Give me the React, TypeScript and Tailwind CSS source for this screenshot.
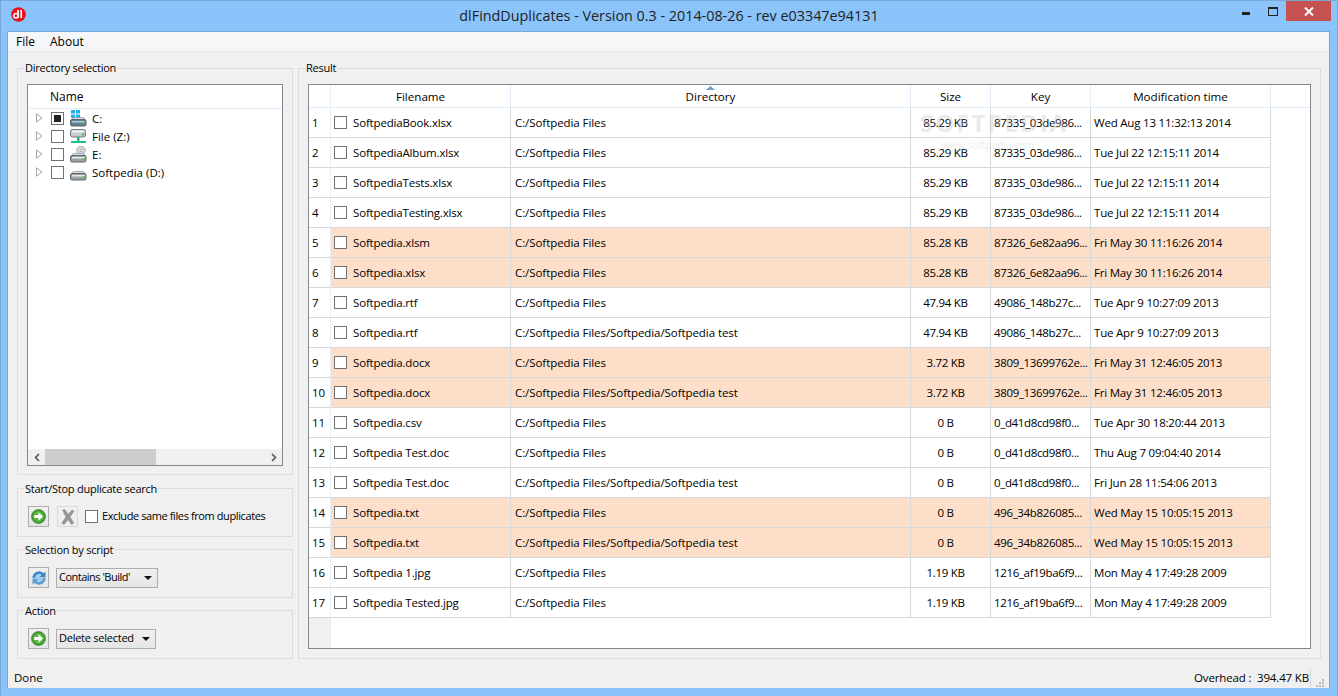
import React from "react";

const font = '"Open Sans","Noto Sans","Liberation Sans",sans-serif';

type Row = [string, string, string, string, string, boolean];
const D1 = "C:/Softpedia Files";
const D2 = "C:/Softpedia Files/Softpedia/Softpedia test";
const K1 = "87335_03de986...";
const K2 = "87326_6e82aa96...";
const K3 = "49086_148b27c...";
const K4 = "3809_13699762e...";
const K5 = "0_d41d8cd98f0...";
const K6 = "496_34b826085...";
const K7 = "1216_af19ba6f9...";
const rows: Row[] = [
  ["SoftpediaBook.xlsx", D1, "85.29 KB", K1, "Wed Aug 13 11:32:13 2014", false],
  ["SoftpediaAlbum.xlsx", D1, "85.29 KB", K1, "Tue Jul 22 12:15:11 2014", false],
  ["SoftpediaTests.xlsx", D1, "85.29 KB", K1, "Tue Jul 22 12:15:11 2014", false],
  ["SoftpediaTesting.xlsx", D1, "85.29 KB", K1, "Tue Jul 22 12:15:11 2014", false],
  ["Softpedia.xlsm", D1, "85.28 KB", K2, "Fri May 30 11:16:26 2014", true],
  ["Softpedia.xlsx", D1, "85.28 KB", K2, "Fri May 30 11:16:26 2014", true],
  ["Softpedia.rtf", D1, "47.94 KB", K3, "Tue Apr 9 10:27:09 2013", false],
  ["Softpedia.rtf", D2, "47.94 KB", K3, "Tue Apr 9 10:27:09 2013", false],
  ["Softpedia.docx", D1, "3.72 KB", K4, "Fri May 31 12:46:05 2013", true],
  ["Softpedia.docx", D2, "3.72 KB", K4, "Fri May 31 12:46:05 2013", true],
  ["Softpedia.csv", D1, "0 B", K5, "Tue Apr 30 18:20:44 2013", false],
  ["Softpedia Test.doc", D1, "0 B", K5, "Thu Aug 7 09:04:40 2014", false],
  ["Softpedia Test.doc", D2, "0 B", K5, "Fri Jun 28 11:54:06 2013", false],
  ["Softpedia.txt", D1, "0 B", K6, "Wed May 15 10:05:15 2013", true],
  ["Softpedia.txt", D2, "0 B", K6, "Wed May 15 10:05:15 2013", true],
  ["Softpedia 1.jpg", D1, "1.19 KB", K7, "Mon May 4 17:49:28 2009", false],
  ["Softpedia Tested.jpg", D1, "1.19 KB", K7, "Mon May 4 17:49:28 2009", false],
];

function Check({ mark = false }: { mark?: boolean }) {
  return (
    <span className="flex h-[13px] w-[13px] shrink-0 items-center justify-center border border-[#707070] bg-white">
      {mark && <span className="h-[7px] w-[7px] bg-[#222]" />}
    </span>
  );
}

function Group({ title, low, className, children }: { title: string; low?: boolean; className?: string; children: React.ReactNode }) {
  return (
    <fieldset className={"min-w-0 border border-[#dcdcdc] " + (className ?? "")}>
      <legend className={"ml-[6px] h-[16px] px-px text-[11px] tracking-[-0.25px] text-[#000] " + (low ? "leading-[18px]" : "leading-[16px]")}>{title}</legend>
      {children}
    </fieldset>
  );
}

function Drive({ top }: { top?: "win" | "net" | "cd" }) {
  return (
    <svg width="17" height="17" viewBox="0 0 17 17" className="shrink-0">
      {top === "win" && (
        <g fill="#1db4ef">
          <rect x="1" y="0" width="4" height="3.5" />
          <rect x="6" y="0" width="4" height="3.5" />
          <rect x="1" y="4.5" width="4" height="3.5" />
          <rect x="6" y="4.5" width="4" height="3.5" />
        </g>
      )}
      {top === "cd" && (
        <g>
          <circle cx="11" cy="4.5" r="4.3" fill="#d6dadf" stroke="#8b8f95" strokeWidth="0.7" />
          <circle cx="11" cy="4.5" r="1.1" fill="#fff" stroke="#777" strokeWidth="0.5" />
        </g>
      )}
      {top === "net" ? (
        <g>
          <rect x="0.5" y="1.5" width="15" height="7.5" rx="2" fill="#c6ccd1" stroke="#737a80" />
          <rect x="2" y="2.5" width="12" height="2" fill="#eef0f2" />
          <rect x="12" y="5.5" width="2" height="2" fill="#4cb848" />
          <rect x="7" y="9" width="2.5" height="4" fill="#22b573" />
          <rect x="1" y="13" width="15" height="2" fill="#22c07f" />
        </g>
      ) : (
        <g>
          <path d="M2 9.5 Q2.5 7.5 4.5 7.5 H12 Q14.5 7.5 15 9.5 V10 H2 Z" fill="#dfe3e6" stroke="#83898e" strokeWidth="0.7" />
          <rect x="0.5" y="9.5" width="15.5" height="6.5" rx="1.5" fill={top === "win" ? "#5c7f92" : "#9aa2a8"} stroke="#5f666b" />
          <rect x="2" y="11" width="12.5" height="1.5" fill={top === "win" ? "#b5cad6" : "#e9ecee"} />
          <rect x="12.5" y="12" width="2" height="2" fill="#5fc24a" />
        </g>
      )}
    </svg>
  );
}

function TreeRow({ label, mark, top }: { label: string; mark?: boolean; top?: "win" | "net" | "cd" }) {
  return (
    <div className="flex h-[18px] items-center pl-[8px]">
      <svg width="7" height="10" viewBox="0 0 7 10" className="shrink-0">
        <path d="M0.5 0.8 L6 5 L0.5 9.2 Z" fill="#fff" stroke="#a6a6a6" />
      </svg>
      <span className="ml-[8px]">
        <Check mark={mark} />
      </span>
      <span className="ml-[6px]">
        <Drive top={top} />
      </span>
      <span className="ml-[5px] whitespace-nowrap pt-px">{label}</span>
    </div>
  );
}

function GoButton() {
  return (
    <button className="flex h-[21px] w-[21px] shrink-0 items-center justify-center border border-[#adadad] bg-gradient-to-b from-[#f0f0f0] to-[#e5e5e5]">
      <svg width="15" height="15" viewBox="0 0 15 15">
        <circle cx="7.5" cy="7.5" r="7" fill="#3f9a2e" stroke="#2c7a22" strokeWidth="0.6" />
        <circle cx="7.5" cy="7.5" r="5.4" fill="#58b544" />
        <path d="M3.2 6 H7.5 V3.2 L12 7.5 L7.5 11.8 V9 H3.2 Z" fill="#fff" />
      </svg>
    </button>
  );
}

function Combo({ label, w, track }: { label: string; w: string; track: string }) {
  return (
    <div className={"flex h-[20px] items-center justify-between border border-[#adadad] bg-gradient-to-b from-[#f0f0f0] to-[#e5e5e5] pl-[2px] pr-[5px] " + w}>
      <span className={"whitespace-nowrap text-[11px] " + track}>{label}</span>
      <svg width="8" height="4" viewBox="0 0 8 4">
        <path d="M0 0 H8 L4 4 Z" fill="#111" />
      </svg>
    </div>
  );
}

export default function App() {
  return (
    <div
      className="flex h-[696px] w-[1338px] flex-col overflow-hidden border border-b-0 border-[#7aa6d4] bg-[#8bc4fa] text-[11.5px] text-[#000]"
      style={{ fontFamily: font }}
    >
      {/* title bar */}
      <div className="grid h-[30px] shrink-0 grid-cols-[1fr_auto_1fr] items-start">
        <div className="flex pl-[10px] pt-[6px]">
          <svg width="15" height="15" viewBox="0 0 15 15">
            <circle cx="7.5" cy="7.5" r="7.3" fill="#e8101c" />
            <circle cx="5" cy="8.7" r="2.2" fill="none" stroke="#fff" strokeWidth="1.5" />
            <path d="M7 3 V11 M10.2 3 V11" stroke="#fff" strokeWidth="1.7" fill="none" />
          </svg>
        </div>
        <div className="pt-[5px] text-[14.35px] leading-[20px] text-[#222]">
          dlFindDuplicates - Version 0.3 - 2014-08-26 - rev e03347e94131
        </div>
        <div className="flex items-start justify-end pr-[6px]">
          <div className="flex h-[20px] w-[26px] items-start justify-center pr-[2px] pt-[11px]">
            <span className="h-[3px] w-[8px] bg-[#222]" />
          </div>
          <div className="flex h-[20px] w-[26px] items-start justify-center pt-[6px]">
            <span className="h-[9px] w-[10px] border border-t-[2px] border-[#222]" />
          </div>
          <div className="flex h-[20px] w-[45px] items-center justify-center bg-[#c75050]">
            <svg width="10" height="9" viewBox="0 0 10 9">
              <path d="M1 0.5 L9 8.5 M9 0.5 L1 8.5" stroke="#fff" strokeWidth="2" />
            </svg>
          </div>
        </div>
      </div>

      {/* client */}
      <div className="mx-[6px] flex min-h-0 w-[1323px] flex-1 flex-col border border-b-0 border-[#7aa6d4] bg-[#f0f0f0]">
        {/* menu */}
        <div className="flex h-[20px] shrink-0 items-center gap-[15px] border-b border-[#e8e8e8] bg-[#f5f6f7] px-[8px] text-[12px]">
          <span>File</span>
          <span>About</span>
        </div>

        {/* body */}
        <div className="flex min-h-0 flex-1 gap-[5px] pl-[9px] pr-[8px] pt-[8px]">
          {/* left */}
          <div className="flex w-[276px] shrink-0 flex-col">
            <Group title="Directory selection" className="h-[415px]">
              <div className="mx-[9px] mt-[8px] flex h-[382px] flex-col border border-[#828790] bg-white">
                <div className="flex h-[24px] shrink-0 items-center border-b border-[#e3eefb] pl-[22px] text-[12px]">Name</div>
                <TreeRow label="C:" mark top="win" />
                <TreeRow label="File (Z:)" top="net" />
                <TreeRow label="E:" top="cd" />
                <TreeRow label="Softpedia (D:)" />
                <div className="mt-auto flex h-[16px] items-center bg-[#f0f0f0]">
                  <span className="flex w-[17px] justify-center">
                    <svg width="6" height="9" viewBox="0 0 6 9"><path d="M5 1 L1.5 4.5 L5 8" fill="none" stroke="#555" strokeWidth="1.6" /></svg>
                  </span>
                  <span className="h-[16px] w-[111px] bg-[#cdcdcd]" />
                  <span className="ml-auto flex w-[17px] justify-center">
                    <svg width="6" height="9" viewBox="0 0 6 9"><path d="M1 1 L4.5 4.5 L1 8" fill="none" stroke="#555" strokeWidth="1.6" /></svg>
                  </span>
                </div>
              </div>
            </Group>

            <Group title="Start/Stop duplicate search" low className="mt-[5px] h-[57px]">
              <div className="ml-[10px] mt-[10px] flex items-center">
                <GoButton />
                <button className="ml-[8px] flex h-[21px] w-[21px] items-center justify-center border border-[#d9d9d9] bg-[#efefef]">
                  <svg width="14" height="16" viewBox="0 0 14 16">
                    <path d="M1.5 1 L4 0.8 L7.2 5.5 L11 1 L13 2 L9 8 L12.8 14 L10.5 15.5 L7 10.5 L3 15.5 L0.8 14 L5 8 Z" fill="#969696" stroke="#808080" strokeWidth="0.5" />
                  </svg>
                </button>
                <span className="ml-[7px]"><Check /></span>
                <span className="ml-[4px] whitespace-nowrap text-[11px] tracking-[-0.4px]">Exclude same files from duplicates</span>
              </div>
            </Group>

            <Group title="Selection by script" low className="mt-[4px] h-[57px]">
              <div className="ml-[10px] mt-[10px] flex items-center">
                <button className="flex h-[21px] w-[21px] shrink-0 items-center justify-center border border-[#adadad] bg-gradient-to-b from-[#f0f0f0] to-[#e5e5e5]">
                  <svg width="16" height="16" viewBox="0 0 16 16">
                    <circle cx="8" cy="8" r="6.5" fill="#a9cbe8" />
                    <path d="M1.5 8 A6.5 6.5 0 0 1 12.5 3.2 L14.5 1.2 V7 H8.8 L10.8 5 A4 4 0 0 0 4 8 Z" fill="#3d86c9" />
                    <path d="M14.5 8 A6.5 6.5 0 0 1 3.5 12.8 L1.5 14.8 V9 H7.2 L5.2 11 A4 4 0 0 0 12 8 Z" fill="#5b9ed6" />
                  </svg>
                </button>
                <span className="ml-[7px]"><Combo label="Contains 'Build'" w="w-[102px]" track="tracking-[-0.5px]" /></span>
              </div>
            </Group>

            <Group title="Action" low className="mt-[4px] h-[57px]">
              <div className="ml-[10px] mt-[10px] flex items-center">
                <GoButton />
                <span className="ml-[7px]"><Combo label="Delete selected" w="w-[100px]" track="tracking-[-0.25px]" /></span>
              </div>
            </Group>
          </div>

          {/* right */}
          <Group title="Result" className="h-[599px] flex-1">
            <div className="relative mx-[9px] mt-[8px] flex h-[565px] flex-col border border-[#828790] bg-white">
              {/* header */}
              <div className="grid h-[23px] shrink-0 grid-cols-[22px_180px_400px_80px_100px_180px_1fr] border-b border-[#e3eefb] bg-white text-center text-[11.6px] leading-[23px]">
                {["", "Filename", "Directory", "Size", "Key", "Modification time"].map((h, i) => (
                  <div key={i} className="relative border-r border-[#e3eefb]">
                    {h}
                    {h === "Directory" && (
                      <svg width="9" height="4" viewBox="0 0 9 4" className="absolute left-[195px] top-[1px]">
                        <path d="M0 4 L4.5 0 L9 4 Z" fill="#6f9ec0" />
                      </svg>
                    )}
                  </div>
                ))}
                <div />
              </div>
              {/* body */}
              <div className="flex min-h-0 flex-1">
                <div className="flex w-[22px] shrink-0 flex-col border-r border-[#e3eefb] bg-[#f0f0f0]">
                  {rows.map((_, i) => (
                    <div key={i} className="flex h-[30px] shrink-0 items-center border-b border-[#d8d8d8] bg-white pl-[3px]">
                      {i + 1}
                    </div>
                  ))}
                </div>
                <div className="flex flex-col">
                  {rows.map((r, i) => (
                    <div
                      key={i}
                      className={
                        "grid h-[30px] grid-cols-[180px_400px_80px_100px_180px] border-b border-[#d8d8d8] " +
                        (r[5] ? "bg-[#fddfc9]" : "bg-white")
                      }
                    >
                      <div className="flex items-center whitespace-nowrap border-r border-[#d8d8d8] pl-[3px]">
                        <Check />
                        <span className="ml-[6px] tracking-[-0.17px]">{r[0]}</span>
                      </div>
                      <div className="flex items-center whitespace-nowrap border-r border-[#d8d8d8] pl-[4px] tracking-[-0.07px]">{r[1]}</div>
                      <div className="flex items-center justify-center whitespace-nowrap border-r border-[#d8d8d8] pr-[10px] tracking-[-0.3px]">{r[2]}</div>
                      <div className="flex items-center overflow-hidden whitespace-nowrap border-r border-[#d8d8d8] pl-[3px] tracking-[-0.35px]">{r[3]}</div>
                      <div className="flex items-center whitespace-nowrap border-r border-[#d8d8d8] pl-[3px] tracking-[-0.2px]">{r[4]}</div>
                    </div>
                  ))}
                </div>
              </div>
              {/* watermark */}
              <div className="pointer-events-none absolute left-[611px] top-[26px] leading-none text-[#bdbdbd] opacity-30">
                <div className="text-[24px] font-bold tracking-[2px]">SOFTPEDIA</div>
                <div className="mt-[5px] pl-[22px] text-[10px]">www.softpedia.com</div>
              </div>
            </div>
          </Group>
        </div>

        {/* status bar */}
        <div className="flex h-[21px] shrink-0 items-center pl-[6px] pr-[2px] pt-px text-[11.5px]">
          <span>Done</span>
          <span className="ml-auto whitespace-pre border-r border-[#d8d8d8] pr-[1px] tracking-[-0.15px]">Overhead :  394.47 KB</span>
          <svg width="16" height="12" viewBox="0 0 16 12" className="self-end">
            <g fill="#b8b8b8">
              <rect x="11" y="3" width="2" height="2" />
              <rect x="8" y="6" width="2" height="2" />
              <rect x="11" y="6" width="2" height="2" />
              <rect x="5" y="9" width="2" height="2" />
              <rect x="8" y="9" width="2" height="2" />
              <rect x="11" y="9" width="2" height="2" />
            </g>
          </svg>
        </div>
      </div>
      <div className="h-[8px] shrink-0" />
    </div>
  );
}
